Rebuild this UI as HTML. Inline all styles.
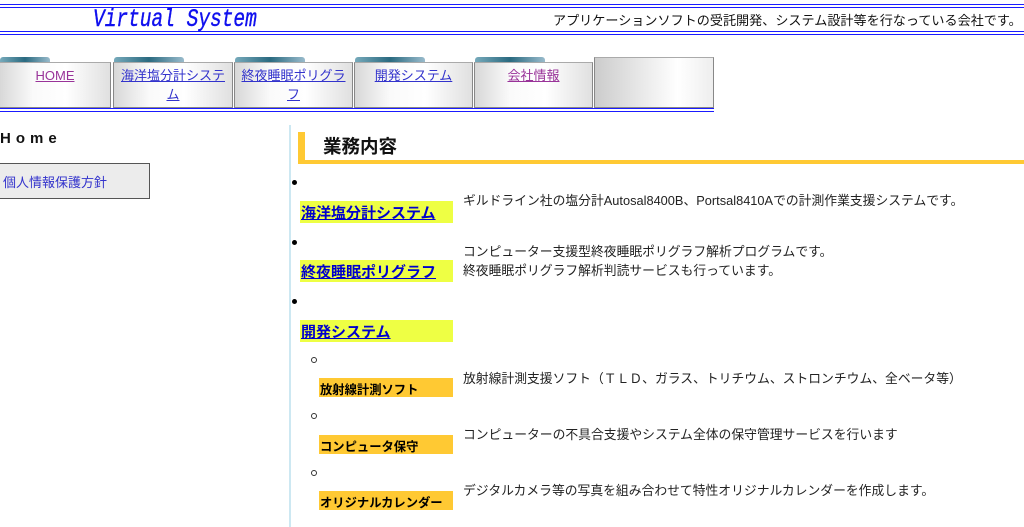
<!DOCTYPE html>
<html><head><meta charset="utf-8"><style>
*{margin:0;padding:0;box-sizing:border-box}
body{width:1024px;height:527px;overflow:hidden;background:#fff;position:relative;font-family:"Liberation Sans","Noto Sans CJK JP",sans-serif;font-size:13px;color:#222}
.a{position:absolute}
.hl{position:absolute;height:1px;background:#1a1aff}
.tab{position:absolute;top:62px;height:46px;border:1px solid #888;border-top:1px solid #aaa;background:linear-gradient(90deg,#d8d8d8 0%,#fafafa 30%,#fff 60%,#e0e0e0 100%);text-align:center;font-size:13px;line-height:19px;padding:3px 4px 0}
.tab a{color:#33c;text-decoration:underline}
.tab a.v{color:#939}
.tt{position:absolute;top:57px;height:6px;background:linear-gradient(90deg,#7ab 0%,#2a6a80 50%,#9bc 100%);border-radius:3px 3px 0 0}
.y{position:absolute;left:300px;width:153px;height:22px;background:#eeff44}
.y a{color:#00c;font-weight:bold;font-size:15px;position:absolute;left:1px;top:1px;text-decoration:underline}
.o{position:absolute;left:319px;width:134px;height:19px;background:#ffc933;font-weight:bold;font-size:12.3px;color:#000;padding:2px 0 0 1px}
.d{position:absolute;left:463px;font-size:12.8px;line-height:19px;color:#222}
.b{position:absolute;left:292px;width:5px;height:5px;border-radius:50%;background:#000}
.c{position:absolute;left:311px;width:6px;height:6px;border-radius:50%;border:1px solid #333}
</style></head><body>
<div class="hl" style="left:0;top:4px;width:1024px"></div>
<div class="hl" style="left:0;top:7px;width:1024px"></div>
<div class="hl" style="left:0;top:31px;width:1024px"></div>
<div class="hl" style="left:0;top:34px;width:1024px"></div>
<div class="a" style="left:93px;top:5px;font-family:'Liberation Mono',monospace;font-style:italic;font-size:25px;color:#1010ee;transform:scaleX(0.78);transform-origin:left;-webkit-text-stroke:0.4px #1010ee">Virtual System</div>
<div class="a" style="left:553px;top:10px;font-size:13.1px;color:#111">アプリケーションソフトの受託開発、システム設計等を行なっている会社です。</div>

<div class="tt" style="left:0;width:50px"></div>
<div class="tt" style="left:114px;width:70px"></div>
<div class="tt" style="left:235px;width:70px"></div>
<div class="tt" style="left:355px;width:70px"></div>
<div class="tt" style="left:475px;width:70px"></div>
<div class="tab" style="left:-1px;width:112px"><a class="v">HOME</a></div>
<div class="tab" style="left:113px;width:120px"><a>海洋塩分計システム</a></div>
<div class="tab" style="left:234px;width:119px"><a>終夜睡眠ポリグラフ</a></div>
<div class="tab" style="left:354px;width:119px"><a>開発システム</a></div>
<div class="tab" style="left:474px;width:119px"><a class="v">会社情報</a></div>
<div class="tab" style="left:594px;top:57px;height:51px;width:120px;background:linear-gradient(90deg,#ccc,#fff 70%,#eee)"></div>
<div class="hl" style="left:0;top:108px;width:714px"></div>
<div class="hl" style="left:0;top:111px;width:714px"></div>

<div class="a" style="left:0;top:130px;font-weight:bold;font-size:15px;letter-spacing:5px;color:#111">Home</div>
<div class="a" style="left:-2px;top:163px;width:152px;height:36px;background:#ececec;border:1px solid #555;color:#33c;font-size:13px;padding:8px 0 0 4px">個人情報保護方針</div>

<div class="a" style="left:289px;top:125px;width:2px;height:402px;background:#cde8f2"></div>
<div class="a" style="left:298px;top:132px;width:7px;height:32px;background:#ffc933"></div>
<div class="a" style="left:298px;top:160px;width:726px;height:4px;background:#ffc933"></div>
<div class="a" style="left:323px;top:133px;font-weight:bold;font-size:18.5px;color:#111">業務内容</div>

<div class="b" style="top:180px"></div>
<div class="y" style="top:201px"><a>海洋塩分計システム</a></div>
<div class="d" style="top:191px">ギルドライン社の塩分計Autosal8400B、Portsal8410Aでの計測作業支援システムです。</div>
<div class="b" style="top:240px"></div>
<div class="y" style="top:260px"><a>終夜睡眠ポリグラフ</a></div>
<div class="d" style="top:242px">コンピューター支援型終夜睡眠ポリグラフ解析プログラムです。<br>終夜睡眠ポリグラフ解析判読サービスも行っています。</div>
<div class="b" style="top:299px"></div>
<div class="y" style="top:320px"><a>開発システム</a></div>

<div class="c" style="top:357px"></div>
<div class="o" style="top:378px">放射線計測ソフト</div>
<div class="d" style="top:369px">放射線計測支援ソフト（ＴＬＤ、ガラス、トリチウム、ストロンチウム、全ベータ等）</div>
<div class="c" style="top:413px"></div>
<div class="o" style="top:435px">コンピュータ保守</div>
<div class="d" style="top:425px">コンピューターの不具合支援やシステム全体の保守管理サービスを行います</div>
<div class="c" style="top:470px"></div>
<div class="o" style="top:491px">オリジナルカレンダー</div>
<div class="d" style="top:481px">デジタルカメラ等の写真を組み合わせて特性オリジナルカレンダーを作成します。</div>
</body></html>
